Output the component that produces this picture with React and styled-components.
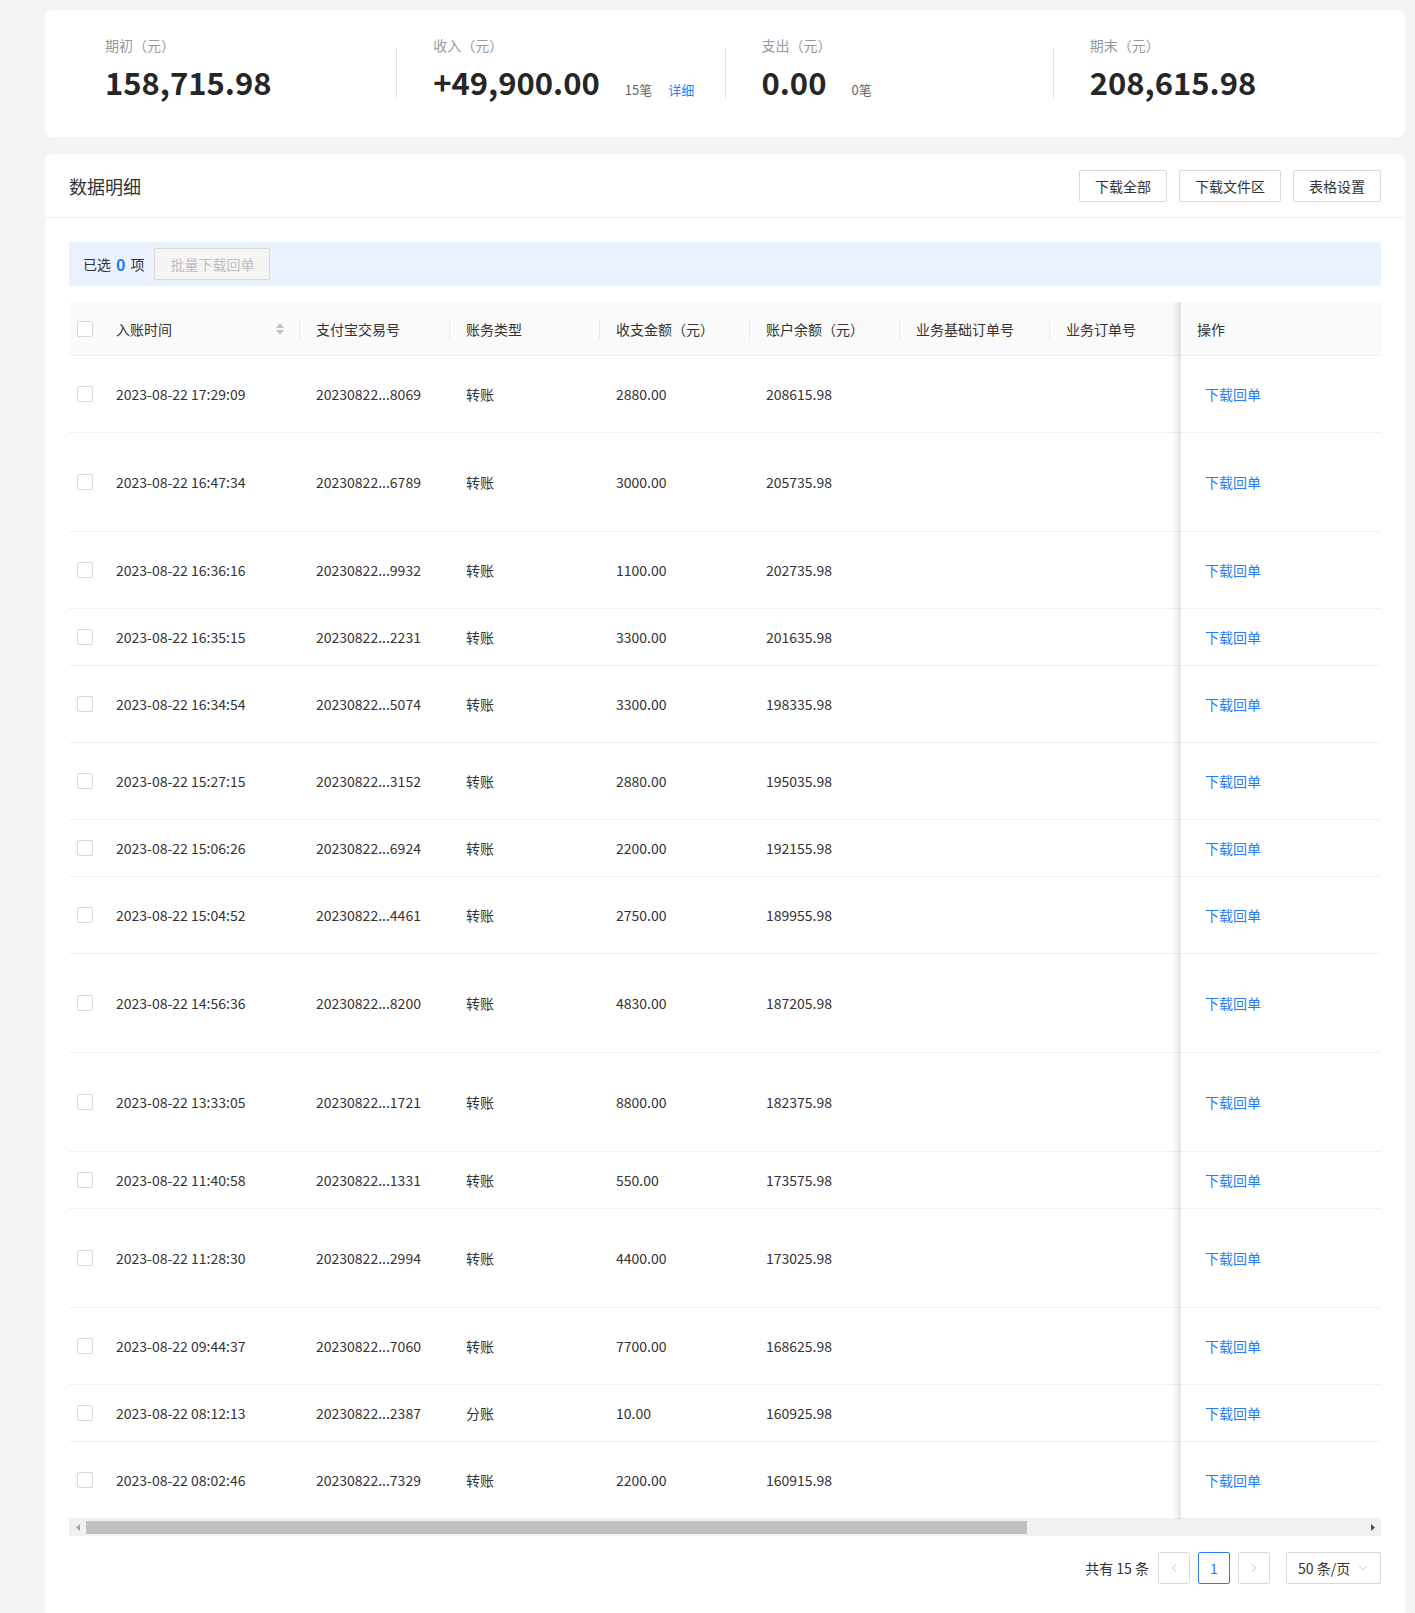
import React from "react";
import styled, { createGlobalStyle, css } from "styled-components";
import { ChevronLeft, ChevronRight, ChevronDown } from "lucide-react";

const BLUE = "#2a7bf6";

const GlobalStyle = createGlobalStyle`
  html, body { margin: 0; padding: 0; background: #f4f4f4; }
  body {
    font-family: "Noto Sans CJK SC", "Noto Sans", sans-serif;
    color: #333;
    -webkit-font-smoothing: antialiased;
  }
  * { box-sizing: border-box; }
`;

const Page = styled.div`
  min-height: 100vh;
  padding: 10px 10px 0 45px;
  display: flex;
  flex-direction: column;
  gap: 17px;
`;

const SummaryCard = styled.section`
  background: #fff;
  border-radius: 8px;
  height: 127px;
  padding: 24px 24px 0;
`;

const Stats = styled.div`
  display: flex;
  align-items: flex-start;
`;

const Stat = styled.div`
  flex: 1;
  padding-left: 36px;
`;

const StatDivider = styled.div`
  width: 1px;
  height: 50px;
  margin-top: 14px;
  background: #e3e3e3;
`;

const StatLabel = styled.div`
  font-size: 14px;
  line-height: 22px;
  color: #999;
`;

const StatValueRow = styled.div`
  display: flex;
  align-items: baseline;
  margin-top: 4px;
`;

const BigNumber = styled.span`
  font-size: 31px;
  line-height: 44px;
  font-weight: 700;
  color: #262626;
`;

const StatSub = styled.span`
  font-size: 13px;
  color: #666;
  margin-left: 25px;
`;

const StatLink = styled.a`
  font-size: 13px;
  color: ${BLUE};
  margin-left: 16px;
  cursor: pointer;
`;

const DetailCard = styled.section`
  flex: 1;
  background: #fff;
  border-radius: 8px 8px 0 0;
  padding-bottom: 24px;
`;

const CardHeader = styled.header`
  height: 64px;
  padding: 0 24px;
  display: flex;
  align-items: center;
  justify-content: space-between;
  border-bottom: 1px solid #f0f0f0;
`;

const CardTitle = styled.h2`
  margin: 0;
  font-size: 18px;
  font-weight: 400;
  color: #333;
`;

const Toolbar = styled.div`
  display: flex;
  gap: 12px;
`;

const Button = styled.button`
  height: 32px;
  padding: 0 15px;
  font-family: inherit;
  font-size: 14px;
  color: #333;
  background: #fff;
  border: 1px solid #d9d9d9;
  border-radius: 2px;
  cursor: pointer;
  ${(p) =>
    p.disabled &&
    css`
      color: #bfbfbf;
      background: #f5f5f5;
      cursor: not-allowed;
    `}
`;

const CardBody = styled.div`
  padding: 24px 24px 0;
`;

const SelectBar = styled.div`
  height: 44px;
  display: flex;
  align-items: center;
  padding: 0 14px;
  background: #ebf2ff;
  font-size: 14px;
  color: #333;
`;

const SelectCount = styled.b`
  color: ${BLUE};
  font-size: 16px;
  margin: 0 5px;
`;

const BatchButton = styled(Button)`
  margin-left: 10px;
`;

const TableFrame = styled.div`
  margin-top: 16px;
`;

const TableViewport = styled.div`
  overflow: hidden;
`;

const ScrollBar = styled.div`
  height: 17px;
  display: flex;
  background: #f1f1f1;
`;

const ScrollArrow = styled.span`
  width: 17px;
  height: 17px;
  flex: none;
  display: flex;
  align-items: center;
  justify-content: center;
`;

const ScrollTrack = styled.div`
  flex: 1;
  padding: 2px 0;
`;

const ScrollThumb = styled.div`
  height: 13px;
  background: #c1c1c1;
`;

const Table = styled.table`
  width: ${(p) => p.$width}px;
  table-layout: fixed;
  border-collapse: separate;
  border-spacing: 0;
`;

const HeadRow = styled.tr`
  height: 54px;
`;

const Row = styled.tr`
  height: ${(p) => p.$h}px;
`;

const fixedCell = css`
  position: sticky;
  right: 0;
  z-index: 2;
  &::after {
    content: "";
    position: absolute;
    top: 0;
    bottom: -1px;
    left: -10px;
    width: 10px;
    pointer-events: none;
    box-shadow: inset -10px 0 8px -8px rgba(0, 0, 0, 0.16);
  }
`;

const Th = styled.th`
  position: relative;
  padding: 0 16px;
  background: #fafafa;
  border-bottom: 1px solid #f0f0f0;
  font-size: 14px;
  font-weight: 400;
  color: #333;
  text-align: left;
  white-space: nowrap;
  ${(p) =>
    p.$divider &&
    css`
      &::before {
        content: "";
        position: absolute;
        right: 0;
        top: 50%;
        width: 1px;
        height: 22px;
        transform: translateY(-50%);
        background: #ececec;
      }
    `}
  ${(p) => p.$check && css`padding: 0 0 0 8px;`}
  ${(p) => p.$fixed && fixedCell}
`;

const Td = styled.td`
  padding: 0 16px;
  background: #fff;
  border-bottom: 1px solid #f0f0f0;
  font-size: 14px;
  color: #333;
  white-space: nowrap;
  ${(p) => p.$check && css`padding: 0 0 0 8px;`}
  ${(p) => p.$fixed && fixedCell}
`;

const SortHead = styled.div`
  display: flex;
  align-items: center;
  justify-content: space-between;
`;

const Checkbox = styled.span`
  display: block;
  width: 16px;
  height: 16px;
  border: 1px solid #d9d9d9;
  border-radius: 2px;
  background: #fff;
`;

const LinkButton = styled.a`
  padding: 0 8px;
  font-size: 14px;
  color: ${BLUE};
  cursor: pointer;
`;

const Pagination = styled.div`
  margin-top: 16px;
  display: flex;
  justify-content: flex-end;
  align-items: center;
  gap: 8px;
  font-size: 14px;
  color: #333;
`;

const Total = styled.span`
  margin-right: 1px;
`;

const PagerBtn = styled.span`
  width: 32px;
  height: 32px;
  display: flex;
  align-items: center;
  justify-content: center;
  border: 1px solid ${(p) => (p.$active ? BLUE : "#d9d9d9")};
  border-radius: 2px;
  color: ${(p) => (p.$active ? BLUE : "#bfbfbf")};
  background: #fff;
  font-size: 14px;
`;

const SizeSelect = styled.div`
  width: 95px;
  height: 32px;
  margin-left: 8px;
  padding: 0 10px 0 11px;
  display: flex;
  align-items: center;
  justify-content: space-between;
  border: 1px solid #d9d9d9;
  border-radius: 2px;
  color: #333;
`;

const SortIcon = () => (
  <svg width="8" height="12" viewBox="0 0 8 12">
    <path d="M4 0 L8 5 L0 5 Z" fill="#bfbfbf" />
    <path d="M0 7 L8 7 L4 12 Z" fill="#bfbfbf" />
  </svg>
);

const Triangle = ({ dir, color }) => (
  <svg width="4" height="7" viewBox="0 0 4 7">
    <path d={dir === "left" ? "M0 3.5 L4 0 L4 7 Z" : "M0 0 L4 3.5 L0 7 Z"} fill={color} />
  </svg>
);

const stats = [
  { label: "期初（元）", value: "158,715.98" },
  { label: "收入（元）", value: "+49,900.00", sub: "15笔", link: "详细" },
  { label: "支出（元）", value: "0.00", sub: "0笔" },
  { label: "期末（元）", value: "208,615.98" },
];

const rows = [
  ["2023-08-22 17:29:09", "20230822...8069", "转账", "2880.00", "208615.98", 77],
  ["2023-08-22 16:47:34", "20230822...6789", "转账", "3000.00", "205735.98", 99],
  ["2023-08-22 16:36:16", "20230822...9932", "转账", "1100.00", "202735.98", 77],
  ["2023-08-22 16:35:15", "20230822...2231", "转账", "3300.00", "201635.98", 57],
  ["2023-08-22 16:34:54", "20230822...5074", "转账", "3300.00", "198335.98", 77],
  ["2023-08-22 15:27:15", "20230822...3152", "转账", "2880.00", "195035.98", 77],
  ["2023-08-22 15:06:26", "20230822...6924", "转账", "2200.00", "192155.98", 57],
  ["2023-08-22 15:04:52", "20230822...4461", "转账", "2750.00", "189955.98", 77],
  ["2023-08-22 14:56:36", "20230822...8200", "转账", "4830.00", "187205.98", 99],
  ["2023-08-22 13:33:05", "20230822...1721", "转账", "8800.00", "182375.98", 99],
  ["2023-08-22 11:40:58", "20230822...1331", "转账", "550.00", "173575.98", 57],
  ["2023-08-22 11:28:30", "20230822...2994", "转账", "4400.00", "173025.98", 99],
  ["2023-08-22 09:44:37", "20230822...7060", "转账", "7700.00", "168625.98", 77],
  ["2023-08-22 08:12:13", "20230822...2387", "分账", "10.00", "160925.98", 57],
  ["2023-08-22 08:02:46", "20230822...7329", "转账", "2200.00", "160915.98", 77],
];

const columns = [
  { key: "check", width: 31 },
  { key: "time", width: 200, title: "入账时间" },
  { key: "no", width: 150, title: "支付宝交易号" },
  { key: "type", width: 150, title: "账务类型" },
  { key: "amount", width: 150, title: "收支金额（元）" },
  { key: "balance", width: 150, title: "账户余额（元）" },
  { key: "base", width: 150, title: "业务基础订单号" },
  { key: "order", width: 600, title: "业务订单号" },
  { key: "op", width: 200, title: "操作" },
];

const tableWidth = columns.reduce((s, c) => s + c.width, 0);
const viewportWidth = 1312;
const thumbRatio = viewportWidth / tableWidth;

export default function App() {
  return (
    <>
      <GlobalStyle />
      <Page>
        <SummaryCard>
          <Stats>
            {stats.map((s, i) => (
              <React.Fragment key={s.label}>
                {i > 0 && <StatDivider />}
                <Stat>
                  <StatLabel>{s.label}</StatLabel>
                  <StatValueRow>
                    <BigNumber>{s.value}</BigNumber>
                    {s.sub && <StatSub>{s.sub}</StatSub>}
                    {s.link && <StatLink>{s.link}</StatLink>}
                  </StatValueRow>
                </Stat>
              </React.Fragment>
            ))}
          </Stats>
        </SummaryCard>

        <DetailCard>
          <CardHeader>
            <CardTitle>数据明细</CardTitle>
            <Toolbar>
              <Button>下载全部</Button>
              <Button>下载文件区</Button>
              <Button>表格设置</Button>
            </Toolbar>
          </CardHeader>
          <CardBody>
            <SelectBar>
              已选<SelectCount>0</SelectCount>项
              <BatchButton disabled>批量下载回单</BatchButton>
            </SelectBar>

            <TableFrame>
              <TableViewport>
                <Table $width={tableWidth}>
                  <colgroup>
                    {columns.map((c) => (
                      <col key={c.key} style={{ width: c.width }} />
                    ))}
                  </colgroup>
                  <thead>
                    <HeadRow>
                      <Th $check>
                        <Checkbox />
                      </Th>
                      <Th $divider>
                        <SortHead>
                          入账时间
                          <SortIcon />
                        </SortHead>
                      </Th>
                      {columns.slice(2, -1).map((c) => (
                        <Th key={c.key} $divider>
                          {c.title}
                        </Th>
                      ))}
                      <Th $fixed>操作</Th>
                    </HeadRow>
                  </thead>
                  <tbody>
                    {rows.map((r) => (
                      <Row key={r[0]} $h={r[5]}>
                        <Td $check>
                          <Checkbox />
                        </Td>
                        <Td>{r[0]}</Td>
                        <Td>{r[1]}</Td>
                        <Td>{r[2]}</Td>
                        <Td>{r[3]}</Td>
                        <Td>{r[4]}</Td>
                        <Td />
                        <Td />
                        <Td $fixed>
                          <LinkButton>下载回单</LinkButton>
                        </Td>
                      </Row>
                    ))}
                  </tbody>
                </Table>
              </TableViewport>
              <ScrollBar>
                <ScrollArrow>
                  <Triangle dir="left" color="#a3a3a3" />
                </ScrollArrow>
                <ScrollTrack>
                  <ScrollThumb style={{ width: `${thumbRatio * 100}%` }} />
                </ScrollTrack>
                <ScrollArrow>
                  <Triangle dir="right" color="#505050" />
                </ScrollArrow>
              </ScrollBar>
            </TableFrame>

            <Pagination>
              <Total>共有 15 条</Total>
              <PagerBtn>
                <ChevronLeft size={14} strokeWidth={1.5} />
              </PagerBtn>
              <PagerBtn $active>1</PagerBtn>
              <PagerBtn>
                <ChevronRight size={14} strokeWidth={1.5} />
              </PagerBtn>
              <SizeSelect>
                50 条/页
                <ChevronDown size={14} strokeWidth={1.5} color="#bfbfbf" />
              </SizeSelect>
            </Pagination>
          </CardBody>
        </DetailCard>
      </Page>
    </>
  );
}
